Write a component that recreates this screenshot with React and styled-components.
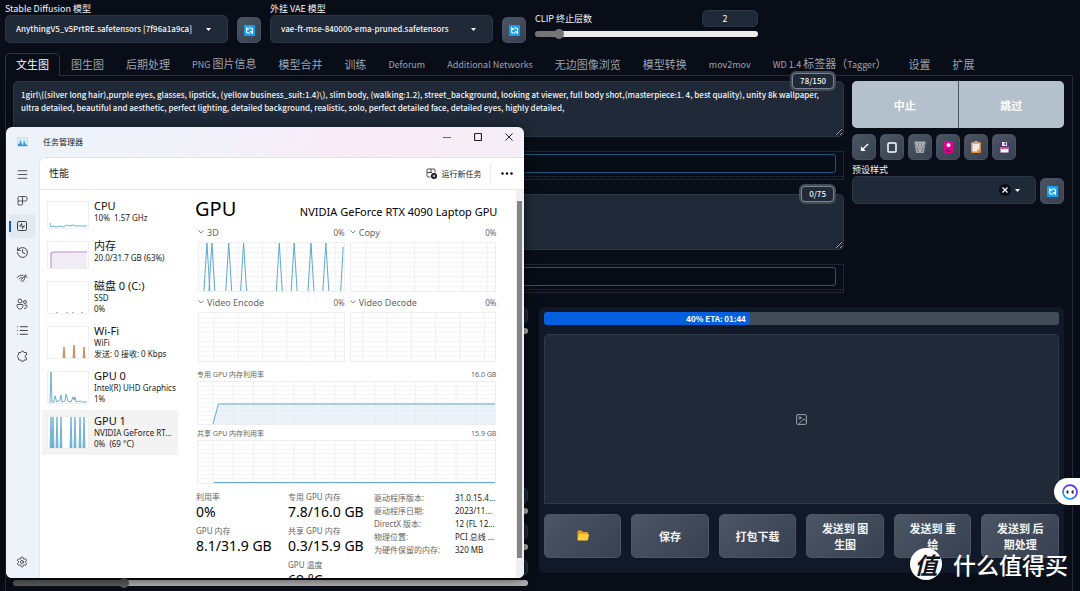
import React, { useState } from 'react';
import styled, { createGlobalStyle, css } from 'styled-components';
import { History, Image as ImageIcon, List, Menu, Settings, SquareActivity } from 'lucide-react';

const webFont = '"Noto Sans CJK SC", sans-serif';
const winFont = '"Noto Sans", "Noto Sans CJK SC", sans-serif';

const TABS = [
  '文生图',
  '图生图',
  '后期处理',
  'PNG 图片信息',
  '模型合并',
  '训练',
  'Deforum',
  'Additional Networks',
  '无边图像浏览',
  '模型转换',
  'mov2mov',
  'WD 1.4 标签器（Tagger）',
  '设置',
  '扩展',
];

const PROMPT =
  '1girl\\((silver long hair),purple eyes, glasses, lipstick, (yellow business_suit:1.4)\\), slim body, (walking:1.2), street_background, looking at viewer, full body shot,(masterpiece:1. 4, best quality), unity 8k wallpaper,\n' +
  'ultra detailed, beautiful and aesthetic, perfect lighting, detailed background, realistic, solo, perfect detailed face, detailed eyes, highly detailed,';

const DEVICES = [
  {
    name: 'CPU',
    lines: ['10%  1.57 GHz'],
    color: '#4a9cc9',
    line: 'M2 21 L3 25 L5 24 L8 25 L12 24 L15 25 L19 23 L22 24 L25 23 L28 24 L33 24 L39 24',
  },
  {
    name: '内存',
    lines: ['20.0/31.7 GB (63%)'],
    color: '#a463b8',
    line: 'M3 26 L3 11 L7 10 L39 10',
    area: 'M3 26 V11 H39 V26 Z',
    fill: '#f1ecf3',
  },
  {
    name: '磁盘 0 (C:)',
    lines: ['SSD', '0%'],
    color: '#9fae86',
    line: 'M8 31 L9 30 L10 31 M18 31 L19 30 L20 31 M24 31 L25 30 L26 31 M33 31 L34 30 L35 31',
  },
  {
    name: 'Wi-Fi',
    lines: ['WiFi', '发送: 0 接收: 0 Kbps'],
    color: '#c07a45',
    fill: '#d9a882',
    area: 'M15 31 L16 20 L17 31 Z M25 31 L26 18 L27 31 Z M35 31 L36 20 L37 31 Z',
    line: 'M15 31 L16 20 L17 31 M25 31 L26 18 L27 31 M35 31 L36 20 L37 31',
  },
  {
    name: 'GPU 0',
    lines: ['Intel(R) UHD Graphics', '1%'],
    color: '#4a9cc9',
    line: 'M2 31 L3 0 L4 30 L6 30 L7 24 L9 30 L12 28 L13 23 L14 30 L17 29 L18 22 L20 29 L23 30 L25 25 L26 28 L27 25 L28 30 L32 29 L34 30 L39 30',
  },
  {
    name: 'GPU 1',
    lines: ['NVIDIA GeForce RT...', '0%  (69 °C)'],
    active: true,
    color: '#5fa9d0',
    fill: '#7db8d9',
    area: 'M2 31 L3 0 L4 31 L5 0 L6 31 Z M8 31 L9 0 L10 31 Z M12 31 L13 0 L14 31 Z M22 31 L23 0 L24 31 Z M26 31 L27 0 L28 31 Z M31 31 L32 0 L33 31 Z M35 31 L36 0 L37 31 Z',
    line: 'M2 31 L3 0 L4 31 L5 0 L6 31 M8 31 L9 0 L10 31 M12 31 L13 0 L14 31 M22 31 L23 0 L24 31 M26 31 L27 0 L28 31 M31 31 L32 0 L33 31 M35 31 L36 0 L37 31',
  },
];

const SPIKES = [8, 13, 30, 45, 81, 96, 113, 128]
  .map(x => `M${x - 3} 50 L${x} 0 L${x + 3} 50`)
  .join(' ');

const DETAILS = [
  ['驱动程序版本:', '31.0.15.4...'],
  ['驱动程序日期:', '2023/11...'],
  ['DirectX 版本:', '12 (FL 12...'],
  ['物理位置:', 'PCI 总线 ...'],
  ['为硬件保留的内存:', '320 MB'],
];

/* ---------- icons ---------- */

const RefreshIcon = () => (
  <svg width='11' height='11' viewBox='0 0 22 22' aria-hidden='true'>
    <rect width='22' height='22' rx='2' fill='#14a0ee' />
    <g fill='none' stroke='#fff' strokeWidth='2.4'>
      <path d='M17 12V9q0-3-3-3H9' />
      <path d='M5 10v3q0 3 3 3h5' />
    </g>
    <path d='M4 3v7h7z M18 19v-7h-7z' fill='#fff' />
  </svg>
);

const CaretIcon = () => (
  <svg width='5' height='3' viewBox='0 0 5 3' aria-hidden='true'>
    <path d='M0 0h5L2.500 3z' fill='#fff' />
  </svg>
);

const ArrowIcon = () => (
  <svg width='9' height='9' viewBox='0 0 20 20' aria-hidden='true'>
    <path d='M18 2 7 13' stroke='#fff' strokeWidth='3' />
    <path d='M2 18V7l11 11z' fill='#fff' />
  </svg>
);

const FrameIcon = () => (
  <svg width='10' height='11' viewBox='0 0 10 11' aria-hidden='true'>
    <rect x='1' y='1' width='8' height='9' rx='1' fill='#3a4454' stroke='#fff' strokeWidth='1.500' />
  </svg>
);

const TrashIcon = () => (
  <svg width='12' height='12' viewBox='0 0 24 24' aria-hidden='true'>
    <path d='M2 4h20l-3 19H5z' fill='#75797e' />
    <path d='M5 6l9 17M10 6l8 15M16 6l4 8M19 6l-9 17M14 6L6 21M8 6l-4 8' stroke='#d3d6d9' strokeWidth='1.300' />
    <path d='M2 4h20l-3 19H5z' fill='none' stroke='#b4b8bc' strokeWidth='1.500' />
    <rect x='1' y='1' width='22' height='4' rx='1' fill='#aeb2b6' />
  </svg>
);

const CardIcon = () => (
  <svg width='9' height='12' viewBox='0 0 18 24' aria-hidden='true'>
    <rect width='18' height='24' rx='2' fill='#e3008c' />
    <circle cx='9' cy='8' r='4' fill='#fff' />
    <path d='M2 21c0-6 4-6 7-3s7-3 7 3z' fill='#7a1360' />
  </svg>
);

const ClipboardIcon = () => (
  <svg width='10' height='12' viewBox='0 0 20 24' aria-hidden='true'>
    <rect y='2' width='20' height='22' rx='2' fill='#d98a3c' />
    <path d='M3 5h14v11l-5 5H3z' fill='#f4f1f6' />
    <path d='M17 16h-5v5z' fill='#c5bfd0' />
    <path d='M6 9h8M6 12h8M6 15h5' stroke='#d5d0dc' strokeWidth='1' />
    <rect x='6' width='8' height='5' rx='1' fill='#a6a2ad' />
  </svg>
);

const FloppyIcon = () => (
  <svg width='11' height='12' viewBox='0 0 22 24' aria-hidden='true'>
    <path d='M1 2h17l4 4v17H1z' fill='#4f3278' />
    <rect x='6' y='2' width='10' height='8' fill='#e6e2ee' />
    <rect x='11' y='3' width='3' height='5' fill='#4f3278' />
    <rect x='3' y='12' width='16' height='11' fill='#fff' />
    <rect x='3' y='12' width='16' height='4' fill='#e8476f' />
  </svg>
);

const FolderIcon = () => (
  <svg width='12' height='11' viewBox='0 0 24 22' aria-hidden='true'>
    <path d='M1 3q0-2 2-2h6l3 3h8q2 0 2 2v13H1z' fill='#e89f1c' />
    <path d='M4 8h19q1 0 1 1l-2 10q0 2-2 2H2q-1 0-1-2z' fill='#ffcd3c' />
  </svg>
);

const AppIcon = () => (
  <svg width='11' height='10' viewBox='0 0 22 20' aria-hidden='true'>
    <rect x='1' y='1' width='20' height='18' fill='#d8effb' stroke='#a9d3ea' />
    <path d='M2 18v-5l3 1 2-9 3 10 2 1 2-10 3 9 4 1v2z' fill='#2f9ad8' />
  </svg>
);

const ProcessIcon = () => (
  <svg width='11' height='11' viewBox='0 0 22 22' fill='none' stroke='#3a3f46' strokeWidth='1.700' aria-hidden='true'>
    <path d='M2 6q0-3 3-3h12q3 0 3 3v3q0 3-3 3H2z' />
    <path d='M11 3v15q0 2-2 2H4q-2 0-2-2v-6' />
  </svg>
);

const StartupIcon = () => (
  <svg width='12' height='10' viewBox='0 0 24 20' fill='none' stroke='#3a3f46' strokeWidth='1.800' strokeLinecap='round' aria-hidden='true'>
    <path d='M2 9q5-6 12-5M20 6l2 3' />
    <path d='M6 12q2-3 6-3' />
    <path d='M19 4l-8 9a2.500 2.500 0 1 0 4 3z' />
  </svg>
);

const PeopleIcon = () => (
  <svg width='12' height='12' viewBox='0 0 24 24' fill='none' stroke='#3a3f46' strokeWidth='1.800' aria-hidden='true'>
    <circle cx='8' cy='6' r='4' />
    <circle cx='18' cy='8' r='3' />
    <path d='M3 13h10q1 0 1 1c0 5-2 8-6 8s-6-3-6-8q0-1 1-1z' />
    <path d='M17 14h4q1 0 1 1c0 4-2 6-6 6' />
  </svg>
);

const PuzzleIcon = () => (
  <svg width='12' height='12' viewBox='0 0 24 24' fill='none' stroke='#3a3f46' strokeWidth='1.800' strokeLinejoin='round' aria-hidden='true'>
    <path d='M6 5h4a3 3 0 0 1 6 0h4q1 0 1 1v4a3 3 0 0 0 0 6v3q0 1-1 1h-4a3 3 0 0 1-6 0H6q-1 0-1-1v-3a3.200 3.200 0 0 1 0-6V6q0-1 1-1z' />
  </svg>
);

const NewTaskIcon = () => (
  <svg width='11' height='11' viewBox='0 0 22 22' aria-hidden='true'>
    <path d='M9 18H4q-2 0-2-2V4q0-2 2-2h12q2 0 2 2v5M2 9h10M10 2v8' fill='none' stroke='#333' strokeWidth='1.700' />
    <circle cx='16' cy='16' r='6' fill='#111' />
    <path d='M16 13v6M13 16h6' stroke='#fff' strokeWidth='1.600' />
  </svg>
);

const ChevronIcon = () => (
  <svg width='6' height='4' viewBox='0 0 6 4' aria-hidden='true'>
    <path d='M.5.500 3 3 5.500.500' fill='none' stroke='#888' />
  </svg>
);

const BotIcon = () => (
  <svg width='16' height='16' viewBox='0 0 32 32' aria-hidden='true'>
    <defs>
      <linearGradient id='ring' x1='1' y1='0' x2='0.400' y2='1'>
        <stop offset='0' stopColor='#3b2be8' />
        <stop offset='.5' stopColor='#6a3df2' />
        <stop offset='1' stopColor='#23a7f0' />
      </linearGradient>
    </defs>
    <circle cx='16' cy='16' r='14' fill='#fff' stroke='url(#ring)' strokeWidth='3.500' />
    <ellipse cx='11' cy='16' rx='2' ry='3.500' fill='#111' />
    <path d='M23 13l-3 3 3 3' fill='none' stroke='#111' strokeWidth='2.500' />
  </svg>
);

/* ---------- small pieces ---------- */

// latin runs are set a step smaller than the chinese ones
const Mixed = ({ children }) =>
  children
    .split(/([\x21-\x7e][\x20-\x7e]*)/)
    .filter(Boolean)
    .map((run, i) => (/^[\x21-\x7e]/.test(run) ? <Latin key={i}>{run}</Latin> : run));

const Chart = ({ width, height, offset, step, line, area, tall }) => {
  const cols = [];
  for (let x = offset; x < width; x += step) cols.push(x);
  const rows = [1, 2, 3, 4, 5, 6, 7, 8, 9].map(n => (n * height) / 10);
  return (
    <ChartBox viewBox={`0 0 ${width} ${height}`} preserveAspectRatio='none' $tall={tall} aria-hidden='true'>
      {cols.map(x => (
        <path key={`c${x}`} d={`M${x} 0V${height}`} stroke='#eceff1' />
      ))}
      {rows.map(y => (
        <path key={`r${y}`} d={`M0 ${y}H${width}`} stroke='#f2f4f5' />
      ))}
      {area && <path d={area} fill='#dfeaf3' fillOpacity='.6' />}
      {line && <path d={line} fill='none' stroke='#5ba6c9' />}
    </ChartBox>
  );
};

const SliderField = ({ label, title, min = 0, max = 100, initial, dim }) => {
  const [value, setValue] = useState(initial);
  const percent = ((value - min) / (max - min)) * 100;
  const onChange = e => setValue(Number(e.target.value));
  return (
    <SliderBlock>
      <SliderHead>
        <span>{title}</span>
        <NumberBox type='number' aria-label={`${label} 数值`} value={value} onChange={onChange} />
      </SliderHead>
      <Range
        type='range'
        aria-label={label}
        min={min}
        max={max}
        value={value}
        onChange={onChange}
        $dim={dim}
        style={{ '--fill': `${percent}%` }}
      />
    </SliderBlock>
  );
};

const ModelSelect = ({ id, label, value }) => (
  <ModelField>
    <label htmlFor={id}>{label}</label>
    <SelectShell>
      <Select id={id}>
        <option>{value}</option>
      </Select>
      <CaretSlot $right={17}>
        <CaretIcon />
      </CaretSlot>
    </SelectShell>
  </ModelField>
);

const EngineHead = ({ name }) => (
  <ChartHead>
    <ChevronIcon />
    <EngineName>{name}</EngineName>
    <span>0%</span>
  </ChartHead>
);

const Stat = ({ label, value }) => (
  <StatBox>
    <StatLabel>{label}</StatLabel>
    <StatValue>{value}</StatValue>
  </StatBox>
);

const TaskManager = () => (
  <Window aria-label='任务管理器'>
    <TitleBar>
      <AppIcon />
      <WindowTitle>任务管理器</WindowTitle>
      <WindowButton aria-label='最小化'>
        <svg width='8' height='8' viewBox='0 0 8 8'><path d='M0 4.500h8' stroke='#666' /></svg>
      </WindowButton>
      <WindowButton aria-label='最大化'>
        <svg width='8' height='8' viewBox='0 0 8 8'><rect x='.5' y='.5' width='7' height='7' rx='1' fill='none' stroke='#222' strokeWidth='1.200' /></svg>
      </WindowButton>
      <WindowButton aria-label='关闭'>
        <svg width='8' height='8' viewBox='0 0 8 8'><path d='M.5.500l7 7M7.500.500l-7 7' stroke='#222' /></svg>
      </WindowButton>
    </TitleBar>
    <WindowBody>
      <Rail>
        <RailButton aria-label='菜单'><Menu size={13} strokeWidth={1.6} /></RailButton>
        <RailButton aria-label='进程'><ProcessIcon /></RailButton>
        <RailButton aria-label='性能' $active><SquareActivity size={12} strokeWidth={2} /></RailButton>
        <RailButton aria-label='应用历史记录'><History size={13} strokeWidth={1.8} /></RailButton>
        <RailButton aria-label='启动应用'><StartupIcon /></RailButton>
        <RailButton aria-label='用户'><PeopleIcon /></RailButton>
        <RailButton aria-label='详细信息'><List size={13} strokeWidth={1.8} /></RailButton>
        <RailButton aria-label='服务'><PuzzleIcon /></RailButton>
        <RailButton aria-label='设置' $last><Settings size={12} strokeWidth={1.8} /></RailButton>
      </Rail>
      <Pane>
        <PaneHead>
          <PaneTitle>性能</PaneTitle>
          <TaskButton>
            <NewTaskIcon />
            运行新任务
          </TaskButton>
          <MoreButton aria-label='更多'>
            <svg width='12' height='3' viewBox='0 0 12 3'>
              <circle cx='1.500' cy='1.500' r='1.200' />
              <circle cx='6' cy='1.500' r='1.200' />
              <circle cx='10.500' cy='1.500' r='1.200' />
            </svg>
          </MoreButton>
        </PaneHead>
        <PaneBody>
          <DeviceList>
            {DEVICES.map(d => (
              <Device key={d.name} $active={d.active} $short={d.lines.length === 1}>
                <Thumb viewBox={`0 0 40 ${d.lines.length === 1 ? 26 : 31}`} $short={d.lines.length === 1} aria-hidden='true'>
                  {d.area && <path d={d.area} fill={d.fill} />}
                  <path d={d.line} fill='none' stroke={d.color} strokeWidth='.8' />
                </Thumb>
                <DeviceText>
                  <DeviceName>{d.name}</DeviceName>
                  {d.lines.map(line => (
                    <DeviceLine key={line}>{line}</DeviceLine>
                  ))}
                </DeviceText>
              </Device>
            ))}
          </DeviceList>
          <Details>
            <DetailsHead>
              <GpuTitle>GPU</GpuTitle>
              <GpuName>NVIDIA GeForce RTX 4090 Laptop GPU</GpuName>
            </DetailsHead>
            <Charts>
              <Engines>
                <div>
                  <EngineHead name='3D' />
                  <Chart width={146} height={50} offset={15} step={24.5} line={`${SPIKES} M143 50 L145.500 4`} tall />
                </div>
                <div>
                  <EngineHead name='Copy' />
                  <Chart width={146} height={50} offset={15} step={24.5} tall />
                </div>
                <div>
                  <EngineHead name='Video Encode' />
                  <Chart width={146} height={50} offset={15} step={24.5} tall />
                </div>
                <div>
                  <EngineHead name='Video Decode' />
                  <Chart width={146} height={50} offset={12} step={24.5} tall />
                </div>
              </Engines>
              <MemoryHead>
                <span>专用 GPU 内存利用率</span>
                <span>16.0 GB</span>
              </MemoryHead>
              <Chart
                width={298}
                height={44}
                offset={15}
                step={20.3}
                line='M15 44 L20.500 23 H298'
                area='M15 44 L20.500 23 H298 V44 Z'
              />
              <MemoryHead>
                <span>共享 GPU 内存利用率</span>
                <span>15.9 GB</span>
              </MemoryHead>
              <Chart width={298} height={44} offset={15} step={20.3} line='M16 43.500 H298' />
            </Charts>
            <Stats>
              <div>
                <Stat label='利用率' value='0%' />
                <Stat label='GPU 内存' value='8.1/31.9 GB' />
              </div>
              <div>
                <Stat label='专用 GPU 内存' value='7.8/16.0 GB' />
                <Stat label='共享 GPU 内存' value='0.3/15.9 GB' />
                <Stat label='GPU 温度' value='69 °C' />
              </div>
              <Facts>
                <tbody>
                  {DETAILS.map(([key, value]) => (
                    <tr key={key}>
                      <th scope='row'>{key}</th>
                      <td>{value}</td>
                    </tr>
                  ))}
                </tbody>
              </Facts>
            </Stats>
          </Details>
          <ScrollTrack>
            <ScrollThumb />
          </ScrollTrack>
        </PaneBody>
      </Pane>
    </WindowBody>
  </Window>
);

const App = () => {
  const [tab, setTab] = useState(TABS[0]);
  const [prompt, setPrompt] = useState(PROMPT);
  const [negative, setNegative] = useState('');

  return (
    <Page>
      <GlobalStyle />
      <TopBar>
        <ModelSelect id='model' label='Stable Diffusion 模型' value='AnythingV5_v5PrtRE.safetensors [7f96a1a9ca]' />
        <ToolButton aria-label='刷新模型'><RefreshIcon /></ToolButton>
        <ModelSelect id='vae' label='外挂 VAE 模型' value='vae-ft-mse-840000-ema-pruned.safetensors' />
        <ToolButton aria-label='刷新 VAE'><RefreshIcon /></ToolButton>
        <ClipSlot>
          <SliderField label='CLIP 终止层数' title='CLIP 终止层数' min={1} max={12} initial={2} />
        </ClipSlot>
      </TopBar>

      <TabList role='tablist'>
        {TABS.map(name => (
          <Tab key={name} role='tab' aria-selected={tab === name} $active={tab === name} onClick={() => setTab(name)}>
            <Mixed>{name}</Mixed>
          </Tab>
        ))}
      </TabList>

      <Panel>
        <PromptRow>
          <PromptColumn>
            <PromptBox>
              <PromptArea aria-label='提示词' value={prompt} onChange={e => setPrompt(e.target.value)} />
              <Counter>78/150</Counter>
            </PromptBox>
            <KeywordBox>
              <KeywordInput aria-label='提示词关键词' />
            </KeywordBox>
            <PromptBox>
              <PromptArea aria-label='反向提示词' value={negative} onChange={e => setNegative(e.target.value)} />
              <Counter>0/75</Counter>
            </PromptBox>
            <KeywordBox>
              <KeywordInput aria-label='反向提示词关键词' />
            </KeywordBox>
          </PromptColumn>

          <ActionColumn>
            <ActionPair>
              <ActionButton>中止</ActionButton>
              <ActionButton>跳过</ActionButton>
            </ActionPair>
            <Tools>
              <ToolButton aria-label='读取参数'><ArrowIcon /></ToolButton>
              <ToolButton aria-label='选择'><FrameIcon /></ToolButton>
              <ToolButton aria-label='清空'><TrashIcon /></ToolButton>
              <ToolButton aria-label='附加网络'><CardIcon /></ToolButton>
              <ToolButton aria-label='粘贴'><ClipboardIcon /></ToolButton>
              <ToolButton aria-label='保存样式'><FloppyIcon /></ToolButton>
            </Tools>
            <label htmlFor='preset'>预设样式</label>
            <StyleRow>
              <SelectShell>
                <Select id='preset'>
                  <option aria-label='无' />
                </Select>
                <ClearButton aria-label='清除'>
                  <svg width='6' height='6' viewBox='0 0 6 6'><path d='M.5.500l5 5M5.500.500l-5 5' stroke='#fff' strokeWidth='1.200' /></svg>
                </ClearButton>
                <CaretSlot $right={16}>
                  <CaretIcon />
                </CaretSlot>
              </SelectShell>
              <ToolButton aria-label='刷新样式'><RefreshIcon /></ToolButton>
            </StyleRow>
          </ActionColumn>
        </PromptRow>

        <WorkRow>
          <Parameters>
            <SliderField label='迭代步数' initial={20} dim />
            <SliderGroup>
              <SliderField label='宽度' initial={30} dim />
              <SliderField label='高度' initial={30} dim />
              <SliderField label='提示词引导系数' initial={21} dim />
            </SliderGroup>
          </Parameters>

          <Results>
            <Progress>
              <ProgressFill style={{ width: '40%' }}>40% ETA: 01:44</ProgressFill>
            </Progress>
            <Gallery>
              <ImageIcon size={13} strokeWidth={1.8} />
            </Gallery>
            <SendRow>
              <SendButton aria-label='打开文件夹'><FolderIcon /></SendButton>
              <SendButton>保存</SendButton>
              <SendButton>打包下载</SendButton>
              <SendButton>发送到 图生图</SendButton>
              <SendButton>发送到 重绘</SendButton>
              <SendButton>发送到 后期处理</SendButton>
            </SendRow>
          </Results>
        </WorkRow>
      </Panel>

      <TaskManager />

      <Assistant aria-label='助手'><BotIcon /></Assistant>
      <Brand>
        <BrandMark>值</BrandMark>
        什么值得买
      </Brand>
    </Page>
  );
};

/* ---------- styles ---------- */

const GlobalStyle = createGlobalStyle`
  *, *::before, *::after {
    box-sizing: border-box;
  }
  body {
    margin: 0;
    background: #090d17;
    color: #f3f4f6;
    font: 9px/12px ${webFont};
    overflow: hidden;
  }
  button, input, select, textarea {
    font: inherit;
    color: inherit;
    margin: 0;
  }
  button {
    border: 0;
    padding: 0;
    background: none;
    cursor: pointer;
  }
  svg {
    display: block;
    flex: none;
  }
`;

const Latin = styled.span`
  font-size: 9px;
`;

const Page = styled.div`
  position: relative;
  display: flex;
  flex-direction: column;
  height: 100vh;
  padding: 3px 7px 0 5px;
  overflow: hidden;
`;

const TopBar = styled.header`
  display: flex;
  align-items: flex-end;
  gap: 9px;
`;

const ModelField = styled.div`
  flex: 0 1 223px;
  display: flex;
  flex-direction: column;
  min-width: 0;
`;

const SelectShell = styled.div`
  position: relative;
  display: flex;
  flex: 1;
`;

const Select = styled.select`
  appearance: none;
  width: 100%;
  height: 28px;
  padding: 0 24px 0 10px;
  border: 1px solid #2b3645;
  border-radius: 5px;
  background: #1f2937;
  font-size: 8px;
  font-weight: 500;
  text-overflow: ellipsis;
`;

const CaretSlot = styled.span`
  position: absolute;
  top: 13px;
  right: ${p => p.$right}px;
  pointer-events: none;
`;

const ClearButton = styled.button`
  position: absolute;
  top: 8px;
  right: 25px;
  display: grid;
  place-items: center;
  width: 12px;
  height: 12px;
  border-radius: 50%;
  background: #090d17;
`;

const ToolButton = styled.button`
  display: grid;
  place-items: center;
  flex: none;
  width: 24px;
  height: 26px;
  border: 1px solid #465060;
  border-radius: 5px;
  background: linear-gradient(135deg, #4b5563, #374151);
`;

const ClipSlot = styled.div`
  flex: 0 1 223px;
  padding-bottom: 4px;
`;

const SliderBlock = styled.div`
  display: flex;
  flex-direction: column;
  gap: 2px;
`;

const SliderHead = styled.div`
  display: flex;
  justify-content: space-between;
  align-items: center;
`;

const NumberBox = styled.input`
  appearance: textfield;
  width: 56px;
  height: 17px;
  padding: 0 10px 0 0;
  border: 1px solid #2b3645;
  border-radius: 5px;
  background: #1f2937;
  text-align: center;
  &::-webkit-inner-spin-button {
    appearance: none;
  }
`;

const Range = styled.input`
  appearance: none;
  width: 100%;
  height: 10px;
  background: none;
  &::-webkit-slider-runnable-track {
    height: 6px;
    border-radius: 3px;
    background: linear-gradient(
      to right,
      ${p => (p.$dim ? '#5c5c5c' : '#757575')} var(--fill),
      ${p => (p.$dim ? '#b4b4b4' : '#ececec')} var(--fill)
    );
  }
  &::-webkit-slider-thumb {
    appearance: none;
    width: 10px;
    height: 10px;
    margin-top: -2px;
    border-radius: 50%;
    background: ${p => (p.$dim ? '#5c5c5c' : '#757575')};
  }
`;

const TabList = styled.nav`
  display: flex;
  margin: 10px 0 -1px;
`;

const Tab = styled.button`
  height: 23px;
  padding: 0 10px 2px;
  border: 1px solid transparent;
  border-bottom: 0;
  border-radius: 5px 5px 0 0;
  color: #9ca3af;
  font-size: 11px;
  white-space: nowrap;
  ${p =>
    p.$active &&
    css`
      border-color: #2b3442;
      background: #090d17;
      color: #fff;
      z-index: 1;
    `}
`;

const Panel = styled.main`
  flex: 1;
  display: flex;
  flex-direction: column;
  gap: 14px;
  padding: 5px 8px 0 7px;
  border: 1px solid #232b38;
  border-bottom: 0;
`;

const PromptRow = styled.section`
  display: grid;
  grid-template-columns: minmax(0, 1fr) 212px;
  gap: 8px;
`;

const PromptColumn = styled.div`
  display: flex;
  flex-direction: column;
  gap: 14px;
`;

const PromptBox = styled.div`
  position: relative;
  display: flex;
`;

const PromptArea = styled.textarea`
  width: 100%;
  height: 56px;
  padding: 6px 7px;
  border: 1px solid #2b3645;
  border-radius: 5px;
  background: #1f2937;
  color-scheme: dark;
  font-size: 8px;
  font-weight: 500;
  line-height: 13px;
  resize: vertical;
  outline: 0;
`;

const Counter = styled.span`
  position: absolute;
  top: -8px;
  right: 10px;
  padding: 0 7px;
  border: 1px solid #7c8490;
  border-radius: 4px;
  box-shadow: 0 0 0 2px #434b57;
  background: #1f2937;
  font-size: 8px;
  font-weight: 500;
  line-height: 14px;
`;

const KeywordBox = styled.div`
  height: 29px;
  padding: 2px 7px 0 0;
  border: 1px solid #1f2733;
  &::after {
    content: '';
    display: block;
    margin: 3px -7px 0 0;
    border-top: 1px dotted #2c3543;
  }
`;

const KeywordInput = styled.input`
  display: block;
  width: 100%;
  height: 19px;
  padding: 0 6px;
  border: 1px solid #1a5a80;
  border-radius: 3px;
  background: #080c15;
`;

const ActionColumn = styled.div`
  display: flex;
  flex-direction: column;
`;

const ActionPair = styled.div`
  display: grid;
  grid-template-columns: 1fr 1fr;
  gap: 1px;
  border-radius: 5px;
  background: #4b5563;
  overflow: hidden;
`;

const ActionButton = styled.button`
  height: 47px;
  background: #b4c0cc;
  color: #fff;
  font-size: 11px;
  font-weight: 700;
`;

const Tools = styled.div`
  display: flex;
  gap: 4px;
  margin: 6px 0 4px;
`;

const StyleRow = styled.div`
  display: flex;
  align-items: flex-end;
  gap: 4px;
`;

const WorkRow = styled.section`
  flex: 1;
  display: grid;
  grid-template-columns: minmax(0, 49fr) minmax(0, 50fr);
  gap: 11px;
`;

const Parameters = styled.div`
  display: flex;
  flex-direction: column;
  justify-content: space-between;
  padding-bottom: 3px;
`;

const SliderGroup = styled.div`
  display: flex;
  flex-direction: column;
  gap: 7px;
`;

const Results = styled.div`
  align-self: start;
  padding: 5px 5px 15px;
  border-radius: 5px;
  background: #111827;
`;

const Progress = styled.div`
  border-radius: 3px;
  background: #424b58;
  overflow: hidden;
`;

const ProgressFill = styled.div`
  padding-right: 4px;
  border-radius: 3px;
  background: #0560e0;
  color: #fff;
  font-size: 8px;
  font-weight: 700;
  line-height: 13px;
  text-align: right;
`;

const Gallery = styled.div`
  display: grid;
  place-items: center;
  height: 170px;
  margin: 9px 0 10px;
  border: 1px solid #2f3a49;
  border-radius: 5px 5px 0 0;
  background: #1f2937;
  color: #9ca3af;
`;

const SendRow = styled.div`
  display: grid;
  grid-template-columns: repeat(6, minmax(0, 1fr));
  gap: 10px;
`;

const SendButton = styled.button`
  display: grid;
  place-items: center;
  height: 44px;
  padding: 0 14px 1px;
  border: 1px solid #4b5563;
  border-radius: 5px;
  background: linear-gradient(135deg, #4b5563, #374151);
  font-size: 11px;
  font-weight: 700;
  line-height: 16px;
`;

const Window = styled.section`
  position: absolute;
  top: 127px;
  bottom: 13px;
  left: 6px;
  z-index: 5;
  display: flex;
  flex-direction: column;
  width: 48%;
  border-radius: 6px;
  background: linear-gradient(100deg, #eef3fa 10%, #f3f0f9 40%, #f9ebf6 60%, #f3f0f8);
  box-shadow: 0 2px 12px rgba(0, 0, 0, 0.6);
  color: #222;
  font: 8px/11px ${winFont};
  overflow: hidden;
`;

const TitleBar = styled.div`
  display: flex;
  flex: none;
  height: 30px;
  padding-left: 11px;
  > svg {
    margin: 10px 15px 0 0;
  }
`;

const WindowTitle = styled.span`
  flex: 1;
  padding-top: 9px;
`;

const WindowButton = styled.button`
  display: grid;
  place-items: center;
  width: 31px;
  height: 19px;
`;

const WindowBody = styled.div`
  flex: 1;
  display: grid;
  grid-template-columns: 33px minmax(0, 1fr);
  min-height: 0;
`;

const Rail = styled.nav`
  display: flex;
  flex-direction: column;
  gap: 2px;
  padding: 5px 4px 4px 3px;
  background: #eef2f9;
`;

const RailButton = styled.button`
  display: grid;
  place-items: center;
  flex: none;
  height: 24px;
  border-radius: 3px;
  color: #3a3f46;
  ${p =>
    p.$active &&
    css`
      background: linear-gradient(#0a5cc4, #0a5cc4) 0 50% / 2px 11px no-repeat #e4e8ef;
    `}
  ${p =>
    p.$last &&
    css`
      margin-top: auto;
    `}
`;

const Pane = styled.div`
  display: flex;
  flex-direction: column;
  min-height: 0;
  border-top: 1px solid #e2e2ea;
  border-left: 1px solid #e2e6ee;
  border-radius: 6px 0 0 0;
  background: #fff;
`;

const PaneHead = styled.div`
  display: flex;
  align-items: center;
  flex: none;
  height: 32px;
  padding: 0 11px 0 9px;
  border-bottom: 1px solid #e9e9e9;
`;

const PaneTitle = styled.h2`
  flex: 1;
  margin: 0;
  font-size: 10px;
  font-weight: 400;
`;

const TaskButton = styled.button`
  display: flex;
  align-items: center;
  gap: 4px;
  padding-right: 9px;
`;

const MoreButton = styled.button`
  display: grid;
  place-items: center;
  height: 21px;
  padding-left: 10px;
  border-left: 1px solid #ececec;
`;

const PaneBody = styled.div`
  flex: 1;
  display: grid;
  grid-template-columns: 138px minmax(0, 1fr) 8px;
  min-height: 0;
  overflow: hidden;
`;

const DeviceList = styled.ul`
  margin: 0;
  padding: 5px 0 0 2px;
  list-style: none;
`;

const Device = styled.li`
  display: grid;
  grid-template-columns: 40px minmax(0, 1fr);
  gap: 6px;
  align-items: center;
  min-height: ${p => (p.$short ? 40 : 45)}px;
  padding-left: 6px;
  background: ${p => (p.$active ? '#f3f3f3' : 'none')};
`;

const Thumb = styled.svg`
  width: 40px;
  height: ${p => (p.$short ? 26 : 31)}px;
  background: #fff;
  outline: 1px solid #f0f0f0;
`;

const DeviceText = styled.div`
  align-self: start;
  padding-top: 4px;
`;

const DeviceName = styled.div`
  color: #111;
  font-size: 11px;
  line-height: 13px;
`;

const DeviceLine = styled.div`
  white-space: pre;
`;

const Details = styled.div`
  padding: 6px 20px 0 18px;
  min-width: 0;
`;

const DetailsHead = styled.div`
  display: flex;
  justify-content: space-between;
  align-items: baseline;
  margin: 0 -1px;
  color: #000;
  white-space: nowrap;
`;

const GpuTitle = styled.h1`
  margin: 0;
  font-size: 20px;
  font-weight: 400;
  line-height: 26px;
`;

const GpuName = styled.span`
  font-size: 11px;
`;

const Charts = styled.div`
  padding-left: 1px;
`;

const Engines = styled.div`
  display: grid;
  grid-template-columns: 1fr 1fr;
  column-gap: 5px;
  padding: 0 0 4px 1px;
`;

const ChartHead = styled.div`
  display: flex;
  align-items: center;
  gap: 3px;
  height: 20px;
  color: #666;
`;

const EngineName = styled.span`
  flex: 1;
  font-size: 9px;
`;

const ChartBox = styled.svg`
  width: 100%;
  height: ${p => (p.$tall ? 50 : 44)}px;
  border: 1px solid #eceef0;
`;

const MemoryHead = styled.div`
  display: flex;
  justify-content: space-between;
  padding: 3px 0 1px;
  color: #666;
  font-size: 7px;
`;

const Stats = styled.div`
  display: grid;
  grid-template-columns: 92px 86px minmax(0, 1fr);
  margin-top: 7px;
`;

const StatBox = styled.div`
  margin-bottom: 4px;
  white-space: nowrap;
`;

const StatLabel = styled.div`
  color: #666;
  line-height: 12px;
`;

const StatValue = styled.div`
  color: #000;
  font-size: 14px;
  line-height: 18px;
`;

const Facts = styled.table`
  align-self: start;
  width: 100%;
  border-collapse: collapse;
  table-layout: fixed;
  line-height: 13px;
  th,
  td {
    padding: 0;
    font-weight: 400;
    text-align: left;
    white-space: nowrap;
  }
  th {
    width: 81px;
    color: #666;
  }
`;

const ScrollTrack = styled.div`
  padding: 11px 2px 0 1px;
  background: #f0f0f0;
`;

const ScrollThumb = styled.div`
  height: 91%;
  background: #858585;
`;

const Assistant = styled.button`
  position: absolute;
  right: 0;
  bottom: 86px;
  display: flex;
  align-items: center;
  width: 26px;
  height: 27px;
  padding-left: 8px;
  border-radius: 14px 0 0 14px;
  background: #fff;
`;

const Brand = styled.div`
  position: absolute;
  right: 12px;
  bottom: 11px;
  display: flex;
  align-items: center;
  gap: 11px;
  color: #fff;
  font-size: 23px;
  font-weight: 500;
  line-height: 32px;
`;

const BrandMark = styled.span`
  width: 32px;
  height: 32px;
  border-radius: 50%;
  background: #fff;
  color: #10141e;
  font-weight: 700;
  font-style: italic;
  text-align: center;
`;

export default App;
